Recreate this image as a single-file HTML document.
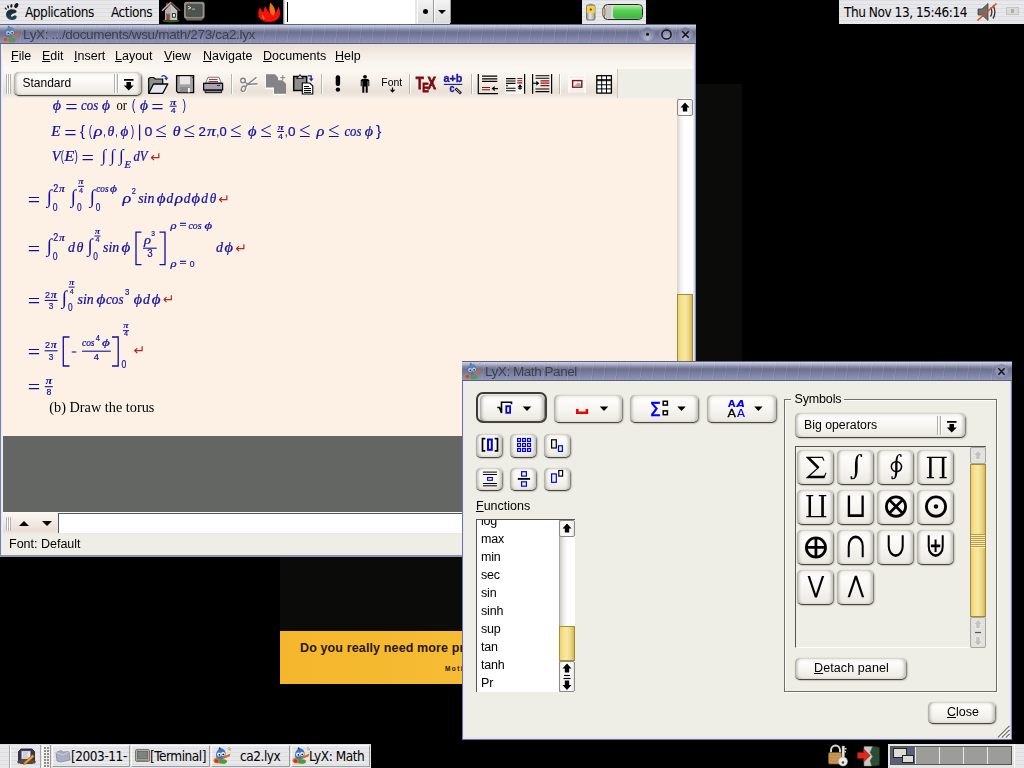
<!DOCTYPE html>
<html><head><meta charset="utf-8"><title>LyX desktop</title>
<style>
html,body{margin:0;padding:0;width:1024px;height:768px;overflow:hidden;background:#000;}
body{position:relative;font-family:"Liberation Sans",sans-serif;font-size:13px;color:#000;}
.abs{position:absolute;}
.t{position:absolute;white-space:pre;line-height:1;}
.panel{background:repeating-linear-gradient(#dcdce6 0 1px,#e8e8e8 1px 4px);}
.dv{font-family:"DejaVu Sans Condensed","DejaVu Sans",sans-serif;font-size:13.500px !important;letter-spacing:-.45px;}
.title{background:linear-gradient(#5e6280 0,#5e6280 1px,#c9cde0 1.5px,#b4b8d0 3px,#8a8ea9 5.500px,#6d718d 8px,#74789a 11px,#8488a8 15px,#8f94b5 18.500px,#5c6080 19px);}
.title:after{content:"";position:absolute;left:0;top:1px;right:0;bottom:1px;background:repeating-linear-gradient(98deg,rgba(255,255,255,0) 0 10px,rgba(255,255,255,.09) 10px 11px,rgba(40,40,80,.05) 11px 12px);}
.btn{position:absolute;border-radius:5px;background:linear-gradient(#f3f1ed 0%,#fdfcfa 22%,#f7f5f0 55%,#ebe8e2 100%);box-shadow:inset 3px 0 3px -1px #b6b4ae,inset -3px 0 3px -1px #c2c0ba,inset 0 1px 1px #e2e0da,0 1px 0 #47473f,1px 1px 2px #605e58,inset 1px 0 0 #a8a6a0;}
.tb{box-sizing:border-box;border:1px solid;border-color:#fafafa #9a9a9a #9a9a9a #fafafa;}
#lyx,#mp{will-change:transform;}
.m u{text-decoration:underline;}
.math{color:#1010a0;font-family:"Liberation Serif",serif;font-style:italic;}
</style></head>
<body>
<!-- wallpaper -->
<div class="abs" id="wall" style="left:280px;top:84px;width:462px;height:600px;background:#0b0b0a;"></div>
<div class="abs" style="left:280px;top:631px;width:182px;height:53px;background:linear-gradient(90deg,#f4b62c,#f6bc34);"></div>
<div class="t" style="left:300px;top:640.500px;font:bold 12.500px 'Liberation Sans',sans-serif;color:#2a1608;letter-spacing:.13px;">Do you really need more pr</div>
<div class="t" style="left:445px;top:665px;font:bold 6.500px 'Liberation Sans',sans-serif;color:#2a1608;letter-spacing:1.400px;">Moti</div>

<!-- top panel -->
<div class="abs panel" style="left:0;top:0;width:159px;height:24px;"></div>
<svg class="abs" style="left:0;top:0" width="24" height="24" viewBox="0 0 24 24">
 <defs><linearGradient id="ft" x1="0" x2="0" y1="0" y2="1"><stop offset="0" stop-color="#1c2226"/><stop offset="1" stop-color="#1d4a62"/></linearGradient></defs>
 <path d="M16.600 11.500C16.600 9.600 13.200 9 11 9.200C8 9.600 6 12 6 14.600C6 17.600 8.600 20 12 20C15 20 16.900 18.500 16.700 16.800C16.500 15.400 14.600 15.200 13.500 16C12.500 16.800 11.400 17 11 16.200C10.500 15.200 12 14.200 13.500 13.600C15 13 16.600 12.800 16.600 11.500Z" fill="url(#ft)"/>
 <ellipse cx="16.300" cy="5.500" rx="1.900" ry="2.700" transform="rotate(32 16.300 5.500)" fill="#15181a"/>
 <ellipse cx="11.400" cy="5.800" rx="1.100" ry="1.900" transform="rotate(5 11.400 5.800)" fill="#15181a"/>
 <ellipse cx="8.100" cy="6.900" rx=".85" ry="1.600" transform="rotate(-15 8.100 6.900)" fill="#15181a"/>
 <ellipse cx="5.800" cy="8.600" rx=".75" ry="1.350" transform="rotate(-38 5.800 8.600)" fill="#15181a"/>
</svg>
<div class="t dv" style="left:25px;top:5.500px;">Applications</div>
<div class="t dv" style="left:111px;top:5.500px;">Actions</div>
<!-- home icon -->
<svg class="abs" style="left:159px;top:0" width="24" height="24" viewBox="159 0 24 24">
 <ellipse cx="171" cy="20.800" rx="8.500" ry="1.700" fill="#2c5a22"/>
 <rect x="166" y="2.800" width="2.500" height="4" fill="#a82c28"/>
 <path d="M165 10.500L171 4l6.300 6.500V20H165z" fill="#c4c4c4"/>
 <path d="M165 10.500L171 4v16h-6z" fill="#b0b0b0"/>
 <path d="M162 10.800L171 2.300" stroke="#cdbfa8" stroke-width="1.500"/><path d="M171 2.300l9 8.500" stroke="#7c5c3c" stroke-width="1.500"/>
 <rect x="167" y="14.500" width="2.200" height="5.500" fill="#c83830"/><rect x="166.500" y="14" width="3.200" height="6" fill="none" stroke="#333" stroke-width=".5"/>
 <rect x="172.400" y="13.600" width="3" height="3.600" fill="#f4f4f4" stroke="#222" stroke-width=".9"/>
</svg>
<!-- terminal icon -->
<svg class="abs" style="left:183px;top:1px" width="23" height="21" viewBox="183 1 23 21">
 <rect x="184.500" y="2.300" width="19.600" height="16" rx="1.500" fill="#8e897e" stroke="#a8a298" stroke-width=".8"/>
 <rect x="186.400" y="4.400" width="15.700" height="12" rx="1" fill="#4e5450" stroke="#3a3c38" stroke-width=".6"/>
 <path d="M188 6.200l3 1.500-3 1.500" stroke="#e0e0e0" stroke-width="1" fill="none"/>
 <rect x="192" y="8.600" width="3" height="1" fill="#b8b8b8"/>
 <path d="M185.500 18.300h17.500l-1 2.200h-15.500z" fill="#6e6a60"/>
</svg>
<!-- flame -->
<svg class="abs" style="left:256px;top:0" width="26" height="24" viewBox="256 0 26 24">
 <path d="M258.300 13.500C258.500 11 259.300 9 260 7C260.800 9.500 262 11.500 263.500 12.300C263.500 10 264.300 7.800 265.500 5.900C266.300 9 268.300 11.500 270.500 13.300L275.500 12.500C276.800 10.800 278 9 278.600 6.800C279.600 9 280.200 11.500 280 14C279.700 19 275 22 269 22C263 22 258 19 258.300 13.500Z" fill="#f8100e"/>
 <path d="M270 2.500C272.500 4.500 274.800 7.500 275 10.500C275.100 12.500 274.300 14.500 273.600 15.700C272 14.800 270.300 13.300 269.700 11.500C269 9 269.800 5.500 270 2.500Z" fill="#f87212"/>
 <path d="M262 14.500C263.300 15.300 264.300 16.800 264.500 18.300C264.600 19.300 263.800 19.500 263.200 18.800C262.300 17.800 261.800 16 262 14.500Z" fill="#e88a20"/>
 <path d="M258 13l-1.300-.5 1.300 1.500zM280.200 13l1.300-.5-1.300 1.500zM258.600 16l-1.200.2 1.500.9zM279.700 16l1.200.2-1.500.9z" fill="#f8100e"/>
</svg>
<div class="abs" style="left:283px;top:0;width:1px;height:24px;background:#8e8e86;"></div><div class="abs" style="left:284px;top:0;width:1px;height:24px;background:#d8d8d4;"></div>

<div class="abs" style="left:285px;top:0;width:130px;height:24px;background:#fff;"></div>
<div class="abs" style="left:287px;top:2px;width:1px;height:20px;background:#000;"></div>
<div class="abs" style="left:415px;top:0;width:35px;height:24px;background:#e6e6e6;"></div>
<div class="abs" style="left:417px;top:0;width:15px;height:23px;background:linear-gradient(#f2f2f2,#dcdcdc);border-right:1px solid #999;border-left:1px solid #fff;"></div>
<div class="abs" style="left:434px;top:0;width:15px;height:23px;background:linear-gradient(#f2f2f2,#dcdcdc);border-right:1px solid #999;border-left:1px solid #fff;"></div>
<div class="abs" style="left:423px;top:9px;width:5px;height:5px;border-radius:50%;background:#000;"></div>
<div class="abs" style="left:438px;top:10px;width:0;height:0;border:4px solid transparent;border-top:4px solid #000;border-bottom:0;"></div>
<!-- battery applet -->
<div class="abs panel" style="left:582px;top:0;width:64px;height:24px;"></div>
<svg class="abs" style="left:584px;top:2px" width="62" height="20" viewBox="0 0 62 20">
 <defs><linearGradient id="bg1" x1="0" x2="0" y1="0" y2="1"><stop offset="0" stop-color="#a8f0a0"/><stop offset=".4" stop-color="#58d058"/><stop offset="1" stop-color="#3cb43c"/></linearGradient>
 <linearGradient id="bg2" x1="0" x2="1" y1="0" y2="0"><stop offset="0" stop-color="#888"/><stop offset=".4" stop-color="#e8e8e8"/><stop offset="1" stop-color="#999"/></linearGradient></defs>
 <rect x="2.500" y="3" width="8.500" height="15" rx="1.500" fill="url(#bg2)" stroke="#555" stroke-width=".7"/>
 <rect x="2.800" y="4" width="8" height="7" fill="#e8d840"/>
 <rect x="5" y="1.800" width="3.500" height="1.500" fill="#888"/>
 <path d="M6.800 6v3M5.500 7.500h2.600" stroke="#d02020" stroke-width=".9"/>
 <rect x="19.500" y="2.500" width="39" height="15" rx="4" fill="#d8d8d0" stroke="#222" stroke-width="1"/>
 <rect x="29" y="3.200" width="29" height="13.600" rx="3.500" fill="url(#bg1)"/>
 <rect x="18.500" y="6" width="2.500" height="8" rx="1" fill="#c8b898" stroke="#443" stroke-width=".6"/>
 <rect x="22" y="4" width="5" height="12" fill="#c0c0b8" opacity=".7"/>
</svg>
<!-- clock applet -->
<div class="abs panel" style="left:839px;top:0;width:185px;height:24px;"></div>
<div class="t dv" style="left:844px;top:5.500px;">Thu Nov 13, 15:46:14</div>
<svg class="abs" style="left:976px;top:1px" width="24" height="22" viewBox="0 0 24 22">
 <path d="M2 8h4l6-5.500v17L6 14H2z" fill="#6e6e6e" stroke="#333" stroke-width=".7"/>
 <path d="M14.500 6.500c1.500 2.500 1.500 6.500 0 9M17 4.500c2.500 3.500 2.500 9.500 0 13" fill="none" stroke="#333" stroke-width="1.300"/>
 <path d="M1.500 19.500L20.500 2.500" stroke="#e04828" stroke-width="1.600"/>
</svg>
<div class="abs" style="left:1006px;top:7px;width:13px;height:8px;background:#dadada;border:1px solid #c4c4c4;box-sizing:border-box;"></div>
<div class="abs" style="left:1011px;top:9px;width:3px;height:4px;background:#b0b0a0;"></div>

<!-- LyX main window -->
<div class="abs" id="lyx" style="left:0;top:24px;width:696px;height:533px;background:#eeeee6;">
  <div class="abs title" style="left:0;top:0;width:696px;height:20px;"></div>
  <svg class="abs" style="left:2px;top:1px;opacity:.62" width="19" height="18" viewBox="0 0 19 17">
 <ellipse cx="5" cy="13.500" rx="4.500" ry="3" fill="#e07820"/><ellipse cx="10" cy="14.500" rx="4" ry="2.300" fill="#4a9a3a"/><circle cx="3.500" cy="14" r="1.800" fill="#d03020"/>
 <path d="M3 9c0-4 2-7.500 5-7.500S13 4 12.500 8c-.3 2.500-2 4.500-4.500 4.500S3 11 3 9z" fill="#3a78c8"/>
 <path d="M5.500 1.500l1.500-1.500 1 2.500z" fill="#222"/>
 <circle cx="6" cy="7.500" r="1.900" fill="#fff"/><circle cx="10" cy="7" r="1.900" fill="#fff"/><circle cx="6.300" cy="7.800" r=".9" fill="#111"/><circle cx="10.200" cy="7.300" r=".9" fill="#111"/>
 <path d="M9 10l8.500-3.500-1 3L10 12z" fill="#e06a20"/><path d="M14.500 3l3-2 .5 2.500z" fill="#d8a040"/><path d="M15 1.500l1.500-1.500" stroke="#6aa0e0" stroke-width="1"/>
</svg>
      <div class="t" style="left:23px;top:3.500px;font-size:13.500px;letter-spacing:-.33px;color:#3e4052;">LyX: .../documents/wsu/math/273/ca2.lyx</div>
  <!-- title buttons -->
  <svg class="abs" style="left:636px;top:1px" width="60" height="19" viewBox="0 0 60 19">
   <defs><radialGradient id="tb" cx=".5" cy=".8" r=".7"><stop offset="0" stop-color="#b4b8d2"/><stop offset="1" stop-color="#767a98"/></radialGradient></defs>
   <circle cx="11.500" cy="9.500" r="6.800" fill="url(#tb)" stroke="#8a8eac" stroke-width=".8"/>
   <circle cx="30.500" cy="9.500" r="6.800" fill="url(#tb)" stroke="#8a8eac" stroke-width=".8"/>
   <circle cx="49.500" cy="9.500" r="6.800" fill="url(#tb)" stroke="#8a8eac" stroke-width=".8"/>
   <circle cx="11.500" cy="9.200" r="1.500" fill="#111"/>
   <circle cx="30.500" cy="9.500" r="4.600" fill="none" stroke="#15151a" stroke-width="1.500"/>
   <path d="M46.300 6.200l6.400 6.600M52.700 6.200l-6.400 6.600" stroke="#15151a" stroke-width="1.600"/>
  </svg>
  <!-- menubar -->
  <div class="abs" style="left:2px;top:20px;width:692px;height:25px;background:linear-gradient(#e8dfd5 0%,#f4ede5 40%,#fcf8f3 100%);"></div>
  <div class="t m" style="left:11px;top:26px;font-size:12.500px;"><u>F</u>ile</div>
  <div class="t m" style="left:42px;top:26px;font-size:12.500px;"><u>E</u>dit</div>
  <div class="t m" style="left:74px;top:26px;font-size:12.500px;"><u>I</u>nsert</div>
  <div class="t m" style="left:115px;top:26px;font-size:12.500px;"><u>L</u>ayout</div>
  <div class="t m" style="left:164px;top:26px;font-size:12.500px;"><u>V</u>iew</div>
  <div class="t m" style="left:203px;top:26px;font-size:12.500px;"><u>N</u>avigate</div>
  <div class="t m" style="left:263px;top:26px;font-size:12.500px;"><u>D</u>ocuments</div>
  <div class="t m" style="left:335px;top:26px;font-size:12.500px;"><u>H</u>elp</div>
  <!-- toolbar -->
  <div class="abs" id="tbar" style="left:2px;top:45px;width:616px;height:29px;background:linear-gradient(#fcf8f3 0%,#f6efe8 40%,#e9e0d7 78%,#f3ece5 100%);"></div>
  <div class="abs" style="left:617px;top:45px;width:1px;height:29px;background:#c8c6c0;"></div>
  <div class="abs" style="left:6px;top:50px;width:5px;height:20px;background:repeating-linear-gradient(90deg,#b8b6b0 0 1px,#fff 1px 2px);"></div>
  <div class="btn" style="left:14px;top:47.500px;width:127px;height:23.500px;"></div>
  <div class="t" style="left:22.500px;top:53px;font-size:12px;">Standard</div>
  <div class="abs" style="left:114px;top:50px;width:5px;height:19px;background:repeating-linear-gradient(90deg,#b0aea8 0 1px,#fff 1px 2px,#e8e6e0 2px 3px);"></div>
  <svg class="abs" style="left:123px;top:54px" width="12" height="13" viewBox="0 0 12 13"><path d="M1 1h9.500v1.700H1zM3.500 4h4.500v3.500h2.700L5.750 12.500 .8 7.500h2.700z" fill="#000"/></svg>
  <svg class="abs" style="left:144px;top:46px" width="474" height="28" viewBox="144 70 474 28" font-family="'Liberation Sans',sans-serif">
   <!-- open -->
   <path d="M148.700 93.200V78.500l1.500-1h3.500l1.500 1.500h7.500v5" fill="#8e8c8c" stroke="#000" stroke-width="1.200"/>
   <path d="M153.500 84h14.300l-5 9.300h-14.100z" fill="#e6e4ec" stroke="#000" stroke-width="1.300" stroke-linejoin="round"/>
   <path d="M161.500 76.500c2-1.500 4.500-1 5 1.800" fill="none" stroke="#2030b0" stroke-width="1.300"/><path d="M164.300 78l2.200 2.600 1.800-3z" fill="#2030b0"/>
   <!-- save -->
   <path d="M176.600 75.600h17v17h-15.500l-1.500-1.500z" fill="#a4a2a2" stroke="#000" stroke-width="1.300"/>
   <rect x="180" y="76.300" width="10" height="8" fill="#e6e6e6"/>
   <rect x="180" y="87" width="10" height="5.300" fill="#8c8a8a"/><rect x="188" y="88" width="1.800" height="4.300" fill="#fff"/>
   <rect x="192" y="77" width="1" height="1.200" fill="#444"/>
   <!-- print -->
   <path d="M208 77.300h11l2.300 5.700h-15.600z" fill="#fbf9f9" stroke="#444" stroke-width=".7"/>
   <path d="M209 79.500h8.500M208.500 81.500h9.500" stroke="#b01818" stroke-width=".9"/>
   <rect x="203.600" y="83.300" width="19" height="6.700" fill="#aca4ac" stroke="#000" stroke-width="1.200"/>
   <rect x="217" y="85" width="3" height="1" fill="#2020c0"/>
   <path d="M205 90.300h16.500v2.400h-16.500z" fill="#8a828a" stroke="#000" stroke-width=".9"/>
   <!-- sep -->
   <path d="M231.500 74v20" stroke="#b8b6ae" stroke-width="1"/><path d="M232.500 74v20" stroke="#fff" stroke-width="1"/>
   <!-- cut -->
   <g transform="translate(.8 .8)" stroke="#fff" fill="none" stroke-width="1.400"><circle cx="243" cy="80.500" r="2.300"/><ellipse cx="243.500" cy="88.800" rx="2" ry="2.700" transform="rotate(20 243.500 88.800)"/><path d="M245 82l3 2.500 9.500-.800M245.500 87l2-2.500 9-7.300"/></g>
   <g stroke="#858385" fill="none" stroke-width="1.400"><circle cx="243" cy="80.500" r="2.300"/><ellipse cx="243.500" cy="88.800" rx="2" ry="2.700" transform="rotate(20 243.500 88.800)"/><path d="M245 82l3 2.500 9.500-.800M245.500 87l2-2.500 9-7.300"/></g>
   <!-- copy -->
   <path d="M266 75h9l3 3v10.500h-12z M274 81h9l3 3v10.500h-12z" fill="#fff" transform="translate(-.8 .8)"/>
   <path d="M266 74.300h9l3 3.200v10h-12z" fill="#858385"/><path d="M274 80.300h8.500l3.500 3.500v10h-12z" fill="#858385"/>
   <path d="M280.300 77.600h5M282.800 75.100v5" stroke="#858385" stroke-width="1"/>
   <!-- paste -->
   <rect x="293.700" y="76.500" width="13" height="14" fill="#908c8c" stroke="#000" stroke-width="1.500"/>
   <path d="M296.500 78.300l2-1.300 1.500-2.500 1.500 2.500 2 1.300z" fill="#fff" stroke="#000" stroke-width=".9"/>
   <path d="M302.300 83h7.500l3 3v8h-10.500z" fill="#fff" stroke="#000" stroke-width="1.100"/>
   <path d="M304 86.500h5M304 88.500h7M304 90.500h7M304 92.400h7" stroke="#000" stroke-width="1"/>
   <path d="M308 75.800h3.200v3.500" fill="none" stroke="#1828b0" stroke-width="1.300"/><path d="M308.800 78.600h4.800l-2.400 2.800z" fill="#1828b0"/>
   <!-- sep -->
   <path d="M321.500 74v20" stroke="#b8b6ae"/><path d="M322.500 74v20" stroke="#fff"/>
   <!-- exclaim -->
   <rect x="335.700" y="75.300" width="4.400" height="10.700" rx="2" fill="#000"/><circle cx="337.900" cy="89.600" r="2.200" fill="#000"/>
   <!-- person -->
   <circle cx="365" cy="76.800" r="1.900" fill="#000"/>
   <path d="M362 79h6l1.300 1.300v6h-1v-5h-.6v11.500h-2V86.500h-1.400v6.300h-2V81.300h-.6v5h-1v-6z" fill="#000"/>
   <!-- Font -->
   <text x="381.300" y="85.800" font-size="11.500" textLength="20.800" lengthAdjust="spacingAndGlyphs" fill="#000">Font</text>
   <path d="M392.500 87.500v3.500" stroke="#000" stroke-width="1.200"/><path d="M389.800 89.800h5.400l-2.700 3z" fill="#000"/>
   <!-- sep -->
   <path d="M409.500 74v20" stroke="#b8b6ae"/><path d="M410.500 74v20" stroke="#fff"/>
   <!-- TeX -->
   <g font-weight="bold" fill="#7c0a12" stroke="#7c0a12" stroke-width=".8"><text x="415.800" y="89" font-size="16.500" textLength="8" lengthAdjust="spacingAndGlyphs">T</text><text x="422.300" y="92" font-size="13.500" textLength="6.500" lengthAdjust="spacingAndGlyphs">E</text><text x="427.500" y="89" font-size="16.500" textLength="8.500" lengthAdjust="spacingAndGlyphs">X</text></g>
   <!-- a+b/c -->
   <g font-weight="bold" fill="#1818a0" stroke="#1818a0" stroke-width=".35"><text x="443.600" y="82.300" font-size="11" textLength="18.800" lengthAdjust="spacingAndGlyphs">a+b</text><text x="449.500" y="92" font-size="11" textLength="5" lengthAdjust="spacingAndGlyphs">c</text></g>
   <path d="M443.800 84.400h18.500" stroke="#1818a0" stroke-width="1.100"/>
   <path d="M455.500 88.500l5.500 5" stroke="#000" stroke-width="2.600"/><path d="M456 89l4.500 4" stroke="#fff" stroke-width=".9"/>
   <!-- sep -->
   <path d="M471.500 74v20" stroke="#b8b6ae"/><path d="M472.500 74v20" stroke="#fff"/>
   <!-- footnote -->
   <path d="M478.300 74v19.600h19.700" fill="none" stroke="#000" stroke-width="1.200"/>
   <path d="M482 76.200h15.300M482 78.800h15.300M482 81.400h15.300" stroke="#000" stroke-width="1.200"/>
   <path d="M482 87.500h8M482 89.700h8" stroke="#8a1010" stroke-width="1.100"/>
   <path d="M493 88.600h5" stroke="#000" stroke-width="1.200"/><path d="M491.500 88.600l3.200-2.700v5.400z" fill="#000"/>
   <!-- margin -->
   <rect x="505" y="74.500" width="19" height="19.500" fill="#f6f4f0"/>
   <path d="M506 78.600h9.500M506 81h9.500M506 83.400h9.500M506 85.800h2M506 88.300h9.500M506 90.700h9.500" stroke="#000" stroke-width="1.100"/>
   <path d="M517.300 78.500h5M517.300 80.700h5M517.300 82.900h5" stroke="#8a1010" stroke-width="1.100"/>
   <path d="M520 86v3.800" stroke="#000" stroke-width="1.200"/><path d="M517.500 87.300l2.500-3 2.500 3z" fill="#000"/><path d="M518 88.300h4" stroke="#000" stroke-width=".9"/>
   <path d="M524.600 74v19.800" stroke="#000" stroke-width="1.200"/>
   <!-- depth -->
   <path d="M532.600 74v19.800M551.600 74v19.800" stroke="#000" stroke-width="1.200"/>
   <path d="M535.500 75.800h13.800M535.500 78.200h13.800M535.500 89h13.800M535.500 91.600h13.800" stroke="#000" stroke-width="1.100"/>
   <path d="M540.500 80.800h8.800M540.500 83.200h8.800M540.500 85.600h8.800" stroke="#8a1010" stroke-width="1.200"/>
   <path d="M533 83.200h4" stroke="#000" stroke-width="1.100"/><path d="M539.300 83.200l-3-2.500v5z" fill="#000"/>
   <!-- sep -->
   <path d="M559.500 74v20" stroke="#b8b6ae"/><path d="M560.500 74v20" stroke="#fff"/>
   <!-- figure -->
   <rect x="568" y="74.800" width="18" height="18" fill="#fbf9f7"/>
   <path d="M570 77.200h14M570 90h14M570 92h14" stroke="#e6e0dc" stroke-width=".8"/>
   <rect x="572.600" y="80.600" width="9.200" height="6.600" fill="#f4f2f2" stroke="#8a1010" stroke-width="1.400"/>
   <path d="M573.500 86.500l2.500-2 1.500-1.500h2l1.500 2v1.500z" fill="#a8a4a4"/>
   <!-- table -->
   <rect x="596.800" y="75.700" width="14.600" height="17.400" fill="#fff" stroke="#000" stroke-width="1.300"/>
   <path d="M596.800 79.700h14.600M596.800 80.700h14.600M596.800 84.800h14.600M596.800 88.900h14.600M601.700 75.700v17.400M606.500 75.700v17.400" stroke="#000" stroke-width="1"/>
  </svg>
  <!-- content -->
  <div class="abs" id="doc" style="left:2px;top:74px;width:676px;height:338px;background:#fdf1e6;"></div>
  <!--MATH--><svg class="abs" style="left:2px;top:74px" width="676" height="338" viewBox="2 98 676 338">
<style>
.mi{font:italic 14px "Liberation Serif",serif;fill:#1010a0;stroke:#1010a0;stroke-width:.22px}
.mib{font:italic bold 10px "Liberation Serif",serif;fill:#1010a0}
.mr{font:14px "Liberation Serif",serif;fill:#1010a0;stroke:#1010a0;stroke-width:.3px}
.mo{font:14px "Liberation Serif",serif;fill:#1010a0}
.mn{font:12.300px "Liberation Sans",sans-serif;fill:#1010a0;stroke:#1010a0;stroke-width:.2px}
.mp{font:14px "Liberation Sans",sans-serif;fill:#1010a0}
.tr{font:14px "Liberation Serif",serif;fill:#000}
.ret{font:14px "DejaVu Sans",sans-serif;fill:#b02828}
</style>
<text class="mi" x="52.7" y="110" textLength="8.3" lengthAdjust="spacingAndGlyphs">ϕ</text>
<text class="mo" x="65.3" y="113.9" style="font-size:22px">=</text>
<text class="mi" x="81" y="110" textLength="17.2" lengthAdjust="spacingAndGlyphs">cos</text>
<text class="mi" x="102" y="110" textLength="8" lengthAdjust="spacingAndGlyphs">ϕ</text>
<text class="tr" x="116.5" y="110" textLength="10.5" lengthAdjust="spacingAndGlyphs">or</text>
<text class="mp" x="131.8" y="110" textLength="3.7" lengthAdjust="spacingAndGlyphs">(</text>
<text class="mi" x="140" y="110" textLength="8" lengthAdjust="spacingAndGlyphs">ϕ</text>
<text class="mo" x="151.2" y="113.9" style="font-size:22px">=</text>
<text class="mib" x="170" y="104.6" textLength="6.4" lengthAdjust="spacingAndGlyphs" style="font-size:8px">π</text>
<path d="M169.7 106.2L176.7 106.2" stroke="#1010a0" stroke-width="1"/>
<text class="mn" x="170.7" y="113.2" textLength="5" lengthAdjust="spacingAndGlyphs" style="font-size:8px">4</text>
<text class="mp" x="182.5" y="110" textLength="3.5" lengthAdjust="spacingAndGlyphs">)</text>
<text class="mi" x="51.3" y="136" textLength="9.2" lengthAdjust="spacingAndGlyphs">E</text>
<text class="mo" x="64.3" y="139.9" style="font-size:22px">=</text>
<text class="mp" x="80" y="136" textLength="5" lengthAdjust="spacingAndGlyphs">{</text>
<text class="mp" x="88.8" y="136" textLength="3.5" lengthAdjust="spacingAndGlyphs">(</text>
<text class="mi" x="93.7" y="136" textLength="8.8" lengthAdjust="spacingAndGlyphs">ρ</text>
<text class="mn" x="103.3" y="136" textLength="2.5" lengthAdjust="spacingAndGlyphs">,</text>
<text class="mi" x="107.4" y="136" textLength="6.8" lengthAdjust="spacingAndGlyphs">θ</text>
<text class="mn" x="115.3" y="136" textLength="2.5" lengthAdjust="spacingAndGlyphs">,</text>
<text class="mi" x="120.5" y="136" textLength="7.8" lengthAdjust="spacingAndGlyphs">ϕ</text>
<text class="mp" x="130.8" y="136" textLength="3.5" lengthAdjust="spacingAndGlyphs">)</text>
<path d="M139.6 124.5L139.6 140.5" stroke="#1010a0" stroke-width="1.2"/>
<text class="mn" x="144.5" y="136" textLength="7.8" lengthAdjust="spacingAndGlyphs">0</text>
<text class="mo" x="155.3" y="137.4" style="font-size:21px">≤</text>
<text class="mi" x="172.8" y="136" textLength="7.8" lengthAdjust="spacingAndGlyphs">θ</text>
<text class="mo" x="183.6" y="137.4" style="font-size:21px">≤</text>
<text class="mn" x="198.6" y="136" textLength="7.4" lengthAdjust="spacingAndGlyphs">2</text>
<text class="mi" x="207" y="136" textLength="8.8" lengthAdjust="spacingAndGlyphs">π</text>
<text class="mn" x="216.5" y="136" textLength="2.5" lengthAdjust="spacingAndGlyphs">,</text>
<text class="mn" x="219.4" y="136" textLength="7.2" lengthAdjust="spacingAndGlyphs">0</text>
<text class="mo" x="230.1" y="137.4" style="font-size:21px">≤</text>
<text class="mi" x="248" y="136" textLength="8.5" lengthAdjust="spacingAndGlyphs">ϕ</text>
<text class="mo" x="260.3" y="137.4" style="font-size:21px">≤</text>
<text class="mib" x="277.4" y="129.6" textLength="6.4" lengthAdjust="spacingAndGlyphs" style="font-size:8px">π</text>
<path d="M277.1 131.5L284.1 131.5" stroke="#1010a0" stroke-width="1"/>
<text class="mn" x="278.1" y="138.5" textLength="5" lengthAdjust="spacingAndGlyphs" style="font-size:8px">4</text>
<text class="mn" x="285" y="136" textLength="2.5" lengthAdjust="spacingAndGlyphs">,</text>
<text class="mn" x="288" y="136" textLength="7.5" lengthAdjust="spacingAndGlyphs">0</text>
<text class="mo" x="298.9" y="137.4" style="font-size:21px">≤</text>
<text class="mi" x="316.4" y="136" textLength="7.9" lengthAdjust="spacingAndGlyphs">ρ</text>
<text class="mo" x="327.9" y="137.4" style="font-size:21px">≤</text>
<text class="mi" x="344.4" y="136" textLength="17" lengthAdjust="spacingAndGlyphs">cos</text>
<text class="mi" x="364.7" y="136" textLength="8.3" lengthAdjust="spacingAndGlyphs">ϕ</text>
<text class="mp" x="376" y="136" textLength="5.5" lengthAdjust="spacingAndGlyphs">}</text>
<text class="mi" x="51.7" y="161.4" textLength="8.8" lengthAdjust="spacingAndGlyphs">V</text>
<text class="mp" x="60.8" y="161.4" textLength="3.2" lengthAdjust="spacingAndGlyphs">(</text>
<text class="mi" x="64.4" y="161.4" textLength="9.8" lengthAdjust="spacingAndGlyphs">E</text>
<text class="mp" x="74.6" y="161.4" textLength="3.4" lengthAdjust="spacingAndGlyphs">)</text>
<text class="mo" x="81.5" y="165.3" style="font-size:22px">=</text>
<text class="mo" x="101.5" y="160.8" style="font-size:17px">∫</text>
<text class="mo" x="110.3" y="160.8" style="font-size:17px">∫</text>
<text class="mo" x="119" y="160.8" style="font-size:17px">∫</text>
<text class="mi" x="124.4" y="167.9" textLength="6.4" lengthAdjust="spacingAndGlyphs" style="font-size:10px">E</text>
<text class="mi" x="133.4" y="161.4" textLength="14" lengthAdjust="spacingAndGlyphs">dV</text>
<text class="ret" x="150.3" y="161.9">↵</text>
<text class="mo" x="27.7" y="207.3" style="font-size:22px">=</text>
<text class="mo" x="46.8" y="203.3" style="font-size:19px">∫</text>
<text class="mn" x="53.2" y="192.2" textLength="5" lengthAdjust="spacingAndGlyphs" style="font-size:10px">2</text>
<text class="mib" x="59" y="192.2" textLength="6" lengthAdjust="spacingAndGlyphs" style="font-size:10px">π</text>
<text class="mn" x="52.8" y="210.5" textLength="4.8" lengthAdjust="spacingAndGlyphs" style="font-size:10px">0</text>
<text class="mo" x="70.8" y="203.3" style="font-size:19px">∫</text>
<text class="mib" x="78.3" y="184.2" textLength="5.4" lengthAdjust="spacingAndGlyphs" style="font-size:8px">π</text>
<path d="M78 186.3L84 186.3" stroke="#1010a0" stroke-width="1"/>
<text class="mn" x="79" y="192.6" textLength="4" lengthAdjust="spacingAndGlyphs" style="font-size:8px">4</text>
<text class="mn" x="77" y="210.5" textLength="4.6" lengthAdjust="spacingAndGlyphs" style="font-size:10px">0</text>
<text class="mo" x="89.8" y="203.3" style="font-size:19px">∫</text>
<text class="mi" x="96.2" y="191.6" textLength="12.3" lengthAdjust="spacingAndGlyphs" style="font-size:10.5px">cos</text>
<text class="mi" x="110" y="191.6" textLength="7" lengthAdjust="spacingAndGlyphs" style="font-size:10.5px">ϕ</text>
<text class="mn" x="95.8" y="210.5" textLength="4.6" lengthAdjust="spacingAndGlyphs" style="font-size:10px">0</text>
<text class="mi" x="122.5" y="203.3" textLength="8.8" lengthAdjust="spacingAndGlyphs">ρ</text>
<text class="mn" x="131.7" y="193.5" textLength="4.1" lengthAdjust="spacingAndGlyphs" style="font-size:9.5px">2</text>
<text class="mi" x="138.2" y="203.3" textLength="16.2" lengthAdjust="spacingAndGlyphs">sin</text>
<text class="mi" x="156.7" y="203.3" textLength="8.8" lengthAdjust="spacingAndGlyphs">ϕ</text>
<text class="mi" x="166.5" y="203.3" textLength="6.7" lengthAdjust="spacingAndGlyphs">d</text>
<text class="mi" x="174.7" y="203.3" textLength="8.3" lengthAdjust="spacingAndGlyphs">ρ</text>
<text class="mi" x="183.7" y="203.3" textLength="6.7" lengthAdjust="spacingAndGlyphs">d</text>
<text class="mi" x="191.5" y="203.3" textLength="8.5" lengthAdjust="spacingAndGlyphs">ϕ</text>
<text class="mi" x="201.2" y="203.3" textLength="6.7" lengthAdjust="spacingAndGlyphs">d</text>
<text class="mi" x="209.8" y="203.3" textLength="6.5" lengthAdjust="spacingAndGlyphs">θ</text>
<text class="ret" x="218.3" y="203.8">↵</text>
<text class="mo" x="27.7" y="256.1" style="font-size:22px">=</text>
<text class="mo" x="46.8" y="252.1" style="font-size:19px">∫</text>
<text class="mn" x="53.2" y="240.6" textLength="5" lengthAdjust="spacingAndGlyphs" style="font-size:10px">2</text>
<text class="mib" x="59" y="240.6" textLength="6" lengthAdjust="spacingAndGlyphs" style="font-size:10px">π</text>
<text class="mn" x="52.8" y="259.6" textLength="4.8" lengthAdjust="spacingAndGlyphs" style="font-size:10px">0</text>
<text class="mi" x="67.9" y="252.1" textLength="7" lengthAdjust="spacingAndGlyphs">d</text>
<text class="mi" x="76.6" y="252.1" textLength="6.9" lengthAdjust="spacingAndGlyphs">θ</text>
<text class="mo" x="87.4" y="252.1" style="font-size:19px">∫</text>
<text class="mib" x="94.8" y="233.8" textLength="5.4" lengthAdjust="spacingAndGlyphs" style="font-size:8px">π</text>
<path d="M94.5 236L100.5 236" stroke="#1010a0" stroke-width="1"/>
<text class="mn" x="95.5" y="242.3" textLength="4" lengthAdjust="spacingAndGlyphs" style="font-size:8px">4</text>
<text class="mn" x="93.2" y="259.6" textLength="4.6" lengthAdjust="spacingAndGlyphs" style="font-size:10px">0</text>
<text class="mi" x="103" y="252.1" textLength="16.2" lengthAdjust="spacingAndGlyphs">sin</text>
<text class="mi" x="121.6" y="252.1" textLength="8.8" lengthAdjust="spacingAndGlyphs">ϕ</text>
<path d="M141.5 232.2H136v32.500h5.500M159.500 232.200H165v32.500h-5.500" fill="none" stroke="#1010a0" stroke-width="1.300"/>
<text class="mi" x="144" y="244.3" textLength="7" lengthAdjust="spacingAndGlyphs" style="font-size:12px">ρ</text>
<text class="mn" x="151.3" y="236.2" textLength="3.7" lengthAdjust="spacingAndGlyphs" style="font-size:8px">3</text>
<path d="M143 248.2L156.7 248.2" stroke="#1010a0" stroke-width="1.1"/>
<text class="mn" x="147.2" y="257.2" textLength="5.4" lengthAdjust="spacingAndGlyphs" style="font-size:10px">3</text>
<text class="mi" x="170.4" y="228.7" textLength="6.1" lengthAdjust="spacingAndGlyphs" style="font-size:10.5px">ρ</text>
<text class="mr" x="179.5" y="228.7" textLength="7" lengthAdjust="spacingAndGlyphs" style="font-size:12px">=</text>
<text class="mi" x="188.5" y="228.7" textLength="13" lengthAdjust="spacingAndGlyphs" style="font-size:10.5px">cos</text>
<text class="mi" x="204.5" y="228.7" textLength="7.7" lengthAdjust="spacingAndGlyphs" style="font-size:10.5px">ϕ</text>
<text class="mi" x="170.4" y="266.8" textLength="6.1" lengthAdjust="spacingAndGlyphs" style="font-size:10.5px">ρ</text>
<text class="mr" x="179.5" y="266.8" textLength="7" lengthAdjust="spacingAndGlyphs" style="font-size:12px">=</text>
<text class="mn" x="189.8" y="266.8" textLength="4.8" lengthAdjust="spacingAndGlyphs" style="font-size:9.5px">0</text>
<text class="mi" x="216" y="252.1" textLength="7" lengthAdjust="spacingAndGlyphs">d</text>
<text class="mi" x="224.5" y="252.1" textLength="8.5" lengthAdjust="spacingAndGlyphs">ϕ</text>
<text class="ret" x="235.3" y="252.6">↵</text>
<text class="mo" x="27.7" y="307.7" style="font-size:22px">=</text>
<text class="mn" x="45" y="298.2" textLength="5" lengthAdjust="spacingAndGlyphs" style="font-size:9.5px">2</text>
<text class="mib" x="50.8" y="298.2" textLength="6.2" lengthAdjust="spacingAndGlyphs" style="font-size:9.5px">π</text>
<path d="M44.6 300.4L57.6 300.4" stroke="#1010a0" stroke-width="1.1"/>
<text class="mn" x="48.8" y="308.8" textLength="4.6" lengthAdjust="spacingAndGlyphs" style="font-size:9.5px">3</text>
<text class="mo" x="61.8" y="304.3" style="font-size:19px">∫</text>
<text class="mib" x="69" y="285.4" textLength="5.4" lengthAdjust="spacingAndGlyphs" style="font-size:8px">π</text>
<path d="M68.7 287.1L74.7 287.1" stroke="#1010a0" stroke-width="1"/>
<text class="mn" x="69.7" y="293.7" textLength="4" lengthAdjust="spacingAndGlyphs" style="font-size:8px">4</text>
<text class="mn" x="67.9" y="311.2" textLength="4.6" lengthAdjust="spacingAndGlyphs" style="font-size:10px">0</text>
<text class="mi" x="77.6" y="304.3" textLength="16.2" lengthAdjust="spacingAndGlyphs">sin</text>
<text class="mi" x="96.6" y="304.3" textLength="8.9" lengthAdjust="spacingAndGlyphs">ϕ</text>
<text class="mi" x="106" y="304.3" textLength="17.5" lengthAdjust="spacingAndGlyphs">cos</text>
<text class="mn" x="125" y="294.7" textLength="4.4" lengthAdjust="spacingAndGlyphs" style="font-size:9.5px">3</text>
<text class="mi" x="133.7" y="304.3" textLength="8.3" lengthAdjust="spacingAndGlyphs">ϕ</text>
<text class="mi" x="143" y="304.3" textLength="7" lengthAdjust="spacingAndGlyphs">d</text>
<text class="mi" x="151.8" y="304.3" textLength="8.8" lengthAdjust="spacingAndGlyphs">ϕ</text>
<text class="ret" x="162.8" y="304.3">↵</text>
<text class="mo" x="27.7" y="358.9" style="font-size:22px">=</text>
<text class="mn" x="45" y="348.4" textLength="5" lengthAdjust="spacingAndGlyphs" style="font-size:9.5px">2</text>
<text class="mib" x="50.8" y="348.4" textLength="6.2" lengthAdjust="spacingAndGlyphs" style="font-size:9.5px">π</text>
<path d="M44.6 350.8L57.6 350.8" stroke="#1010a0" stroke-width="1.1"/>
<text class="mn" x="48.8" y="359.6" textLength="4.6" lengthAdjust="spacingAndGlyphs" style="font-size:9.5px">3</text>
<path d="M69.500 337H63.300v29h6.200M112 337h6.200v29H112" fill="none" stroke="#1010a0" stroke-width="1.300"/>
<path d="M71.8 352L76.3 352" stroke="#1010a0" stroke-width="1.1"/>
<text class="mi" x="82" y="346.3" textLength="12.5" lengthAdjust="spacingAndGlyphs" style="font-size:10.5px">cos</text>
<text class="mn" x="95.8" y="341.2" textLength="4.2" lengthAdjust="spacingAndGlyphs" style="font-size:8.5px">4</text>
<text class="mi" x="102" y="346.3" textLength="7.8" lengthAdjust="spacingAndGlyphs" style="font-size:10.5px">ϕ</text>
<path d="M82 351.2L110.8 351.2" stroke="#1010a0" stroke-width="1.1"/>
<text class="mn" x="93.8" y="360" textLength="5.2" lengthAdjust="spacingAndGlyphs" style="font-size:9.5px">4</text>
<text class="mib" x="123.3" y="328.2" textLength="5.4" lengthAdjust="spacingAndGlyphs" style="font-size:8px">π</text>
<path d="M123 330.7L129 330.7" stroke="#1010a0" stroke-width="1"/>
<text class="mn" x="124" y="336.3" textLength="4" lengthAdjust="spacingAndGlyphs" style="font-size:8px">4</text>
<text class="mn" x="121.6" y="367.9" textLength="4.8" lengthAdjust="spacingAndGlyphs" style="font-size:10px">0</text>
<text class="ret" x="133.5" y="354.5">↵</text>
<text class="mo" x="27.7" y="394" style="font-size:22px">=</text>
<text class="mib" x="45.4" y="384.2" textLength="6.8" lengthAdjust="spacingAndGlyphs" style="font-size:9.5px">π</text>
<path d="M44.8 386.7L52.8 386.7" stroke="#1010a0" stroke-width="1.1"/>
<text class="mn" x="46.4" y="394.7" textLength="4.9" lengthAdjust="spacingAndGlyphs" style="font-size:9.5px">8</text>
<text class="tr" x="49.3" y="411.7" textLength="105.1" lengthAdjust="spacingAndGlyphs">(b) Draw the torus</text>
</svg><!--/MATH-->
  <div class="abs" id="sb" style="left:677px;top:74px;width:16px;height:338px;background:linear-gradient(90deg,#d4d2cc 0,#f4f3f0 4px,#fff 8px,#fff 100%);"></div>
  <div class="abs" style="left:677px;top:75px;width:16px;height:17px;box-sizing:border-box;border:1px solid #8a8884;border-radius:2px;background:linear-gradient(90deg,#f0eeea,#fff 40%,#fff 70%,#e8e6e2);"></div>
  <svg class="abs" style="left:680px;top:78px" width="10" height="10" viewBox="0 0 10 10"><path d="M5 .5L9.500 5.500H7.200V9.500H2.800V5.500H.5z" fill="#000"/></svg>
  <div class="abs" style="left:677px;top:270px;width:16px;height:142px;box-sizing:border-box;border:1px solid #a08c3c;background:linear-gradient(90deg,#ecd070 0,#f6e290 25%,#f8e8a4 50%,#ecd47c 80%,#d4b450 100%);"></div>
  <div class="abs" style="left:3px;top:412px;width:690px;height:76px;background:#646663;"></div>
  <!-- minibuffer -->
  <div class="abs" style="left:2px;top:488px;width:692px;height:23px;background:linear-gradient(#fbf7f3 0,#f4ece6 40%,#e9ded6 80%,#f2ece6 100%);"></div>
  <div class="abs" style="left:58px;top:489px;width:636px;height:20px;background:#fff;border-left:1px solid #555;border-top:1px solid #555;box-sizing:border-box;"></div>
  <div class="abs" style="left:6px;top:493px;width:5px;height:14px;background:repeating-linear-gradient(90deg,#b8b6b0 0 1px,#fff 1px 2px);"></div>
  <div class="abs" style="left:19px;top:497px;width:0;height:0;border:5px solid transparent;border-bottom:5px solid #000;border-top:0;"></div>
  <div class="abs" style="left:42px;top:497px;width:0;height:0;border:5px solid transparent;border-top:5px solid #000;border-bottom:0;"></div>
  <!-- status -->
  <div class="t" style="left:9px;top:513.500px;font-size:12.500px;">Font: Default</div>
  <!-- borders -->
  <div class="abs" style="left:0;top:20px;width:1px;height:513px;background:#7c809c;"></div>
  <div class="abs" style="left:1px;top:20px;width:2px;height:511px;background:linear-gradient(90deg,#dfe3f3,#f4f4fa);"></div>
  <div class="abs" style="left:693px;top:20px;width:1px;height:511px;background:#e8eaf6;"></div><div class="abs" style="left:694px;top:20px;width:1px;height:513px;background:#cdd1ec;"></div><div class="abs" style="left:695px;top:20px;width:1px;height:513px;background:#8a8eae;"></div>
  <div class="abs" style="left:0;top:531px;width:696px;height:2px;background:#9094b2;"></div>
</div>

<!-- Math panel -->
<div class="abs" id="mp" style="left:462px;top:361px;width:550px;height:379px;background:#eeeee6;">
  <div class="abs title" style="left:0;top:0;width:550px;height:20px;"></div>
  <svg class="abs" style="left:2px;top:1px;opacity:.62" width="19" height="18" viewBox="0 0 19 17">
 <ellipse cx="5" cy="13.500" rx="4.500" ry="3" fill="#e07820"/><ellipse cx="10" cy="14.500" rx="4" ry="2.300" fill="#4a9a3a"/><circle cx="3.500" cy="14" r="1.800" fill="#d03020"/>
 <path d="M3 9c0-4 2-7.500 5-7.500S13 4 12.500 8c-.3 2.500-2 4.500-4.500 4.500S3 11 3 9z" fill="#3a78c8"/>
 <path d="M5.500 1.500l1.500-1.500 1 2.500z" fill="#222"/>
 <circle cx="6" cy="7.500" r="1.900" fill="#fff"/><circle cx="10" cy="7" r="1.900" fill="#fff"/><circle cx="6.300" cy="7.800" r=".9" fill="#111"/><circle cx="10.200" cy="7.300" r=".9" fill="#111"/>
 <path d="M9 10l8.500-3.500-1 3L10 12z" fill="#e06a20"/><path d="M14.500 3l3-2 .5 2.500z" fill="#d8a040"/><path d="M15 1.500l1.500-1.500" stroke="#6aa0e0" stroke-width="1"/>
</svg>
      <div class="t" style="left:23px;top:3.500px;font-size:13.500px;letter-spacing:-.45px;color:#3e4052;">LyX: Math Panel</div>
  <svg class="abs" style="left:531px;top:2px" width="17" height="17" viewBox="0 0 17 17"><circle cx="8.500" cy="8.500" r="6.800" fill="#8e92b0" stroke="#7a7e9c" stroke-width=".8"/><path d="M5.400 5.300l6.200 6.400M11.600 5.300l-6.200 6.400" stroke="#15151a" stroke-width="1.600"/></svg>
  <div class="abs" style="left:0;top:20px;width:1px;height:359px;background:#70749a;"></div>
  <div class="abs" style="left:1px;top:20px;width:2px;height:357px;background:linear-gradient(90deg,#dfe3f3,#f0f0f6);"></div>
  <div class="abs" style="left:547px;top:20px;width:1px;height:357px;background:#eceef8;"></div><div class="abs" style="left:548px;top:20px;width:1px;height:359px;background:#cdd1ec;"></div><div class="abs" style="left:549px;top:20px;width:1px;height:359px;background:#8a8eae;"></div>
  <div class="abs" style="left:1px;top:376px;width:548px;height:2px;background:#e4e6f4;"></div><div class="abs" style="left:0;top:378px;width:550px;height:1px;background:#6e7296;"></div>

<div class="abs" style="left:14px;top:31px;width:71px;height:31px;border-radius:7px;border:2px solid #3a3a38;box-sizing:border-box;"></div>
<div class="btn" style="left:17.5px;top:34px;width:64.1px;height:26px;"></div>
<div class="btn" style="left:91.6px;top:34px;width:68.4px;height:27px;"></div>
<div class="btn" style="left:168.3px;top:34px;width:67.9px;height:27px;"></div>
<div class="btn" style="left:245.3px;top:34px;width:68.3px;height:27px;"></div>
<div class="btn" style="left:14.2px;top:73.2px;width:25.8px;height:22.4px;"></div>
<div class="btn" style="left:14.2px;top:107px;width:25.8px;height:22.4px;"></div>
<div class="btn" style="left:48.3px;top:73.2px;width:25.4px;height:22.4px;"></div>
<div class="btn" style="left:48.3px;top:107px;width:25.4px;height:22.4px;"></div>
<div class="btn" style="left:82.3px;top:73.2px;width:25.6px;height:22.4px;"></div>
<div class="btn" style="left:82.3px;top:107px;width:25.6px;height:22.4px;"></div>
  <svg class="abs" style="left:8px;top:29px" width="320" height="104" viewBox="470 390 320 104" font-family="'DejaVu Sans',sans-serif">
   <path d="M497.300 407.500l2.200 0 2 5.500 0-10.800 10 0 0 2" fill="none" stroke="#000" stroke-width="1.600"/>
   <rect x="506.300" y="406.200" width="3.800" height="6.600" fill="none" stroke="#0000f0" stroke-width="1.800"/>
   <path d="M522.800 406.500h8.400l-4.200 4.600z" fill="#000"/>
   <path d="M576 409h2.600v2.500h7v-2.500h2.600v4.900h-12.200z" fill="#f40000"/>
   <path d="M599.800 406.500h8.400l-4.200 4.600z" fill="#000"/>
   <text x="649.500" y="415.700" font-size="19.500" fill="#0000f0" stroke="#0000f0" stroke-width=".5" textLength="11.500" lengthAdjust="spacingAndGlyphs">Σ</text>
   <rect x="663.200" y="401.300" width="4.200" height="3.800" fill="#fff" stroke="#000" stroke-width="1.500"/><rect x="663.200" y="410.900" width="4.200" height="3.800" fill="#fff" stroke="#000" stroke-width="1.500"/>
   <path d="M677.300 406.500h8.400l-4.200 4.600z" fill="#000"/>
   <text x="727.800" y="406.600" font-size="9.500" font-weight="bold" fill="#0000f0" font-family="'DejaVu Sans Mono',monospace" textLength="8" lengthAdjust="spacingAndGlyphs">A</text>
   <text x="736.500" y="406.600" font-size="9.500" font-weight="bold" font-style="italic" fill="#0000f0" textLength="8.500" lengthAdjust="spacingAndGlyphs">A</text>
   <text x="727.500" y="416.600" font-size="10.500" fill="#000" stroke="#000" stroke-width=".3" textLength="8.500" lengthAdjust="spacingAndGlyphs">A</text>
   <text x="736.800" y="416.600" font-size="10.500" fill="#0000f0" font-family="'DejaVu Sans Mono',monospace" textLength="8.500" lengthAdjust="spacingAndGlyphs">A</text>
   <path d="M754.200 406.500h8.400l-4.200 4.600z" fill="#000"/>
   <!-- small icons row 2 -->
   <path d="M485.300 438.600h-2.800v12.200h2.800M494.700 438.600h2.800v12.200h-2.800" fill="none" stroke="#000" stroke-width="1.700"/>
   <rect x="488" y="439.500" width="3.800" height="10.300" fill="none" stroke="#0000f0" stroke-width="2"/>
   <g fill="none" stroke="#0000f0" stroke-width="1.200"><rect x="517.600" y="438.500" width="2.900" height="2.900"/><rect x="522.600" y="438.500" width="2.900" height="2.900"/><rect x="527.600" y="438.500" width="2.900" height="2.900"/><rect x="517.600" y="443.500" width="2.900" height="2.900"/><rect x="522.600" y="443.500" width="2.900" height="2.900"/><rect x="527.600" y="443.500" width="2.900" height="2.900"/><rect x="517.600" y="448.500" width="2.900" height="2.900"/><rect x="522.600" y="448.500" width="2.900" height="2.900"/><rect x="527.600" y="448.500" width="2.900" height="2.900"/></g>
   <rect x="551.600" y="439.800" width="4.700" height="8.200" fill="#f4f2ee" stroke="#000" stroke-width="1.200"/><rect x="558.500" y="445.800" width="3.900" height="5.600" fill="#f4f2ee" stroke="#0000f0" stroke-width="1.200"/>
   <!-- row 3 -->
   <path d="M482.900 472.100h14M482.900 474.500h14M482.900 483.500h14M482.900 485.800h14" stroke="#000" stroke-width="1"/>
   <rect x="487.600" y="477.500" width="4.800" height="2.800" fill="#f4f2ee" stroke="#0000f0" stroke-width="1.100"/>
   <rect x="521.600" y="471.700" width="4.800" height="4.400" fill="#f4f2ee" stroke="#0000f0" stroke-width="1.200"/><rect x="521.600" y="481.800" width="4.800" height="4.400" fill="#f4f2ee" stroke="#0000f0" stroke-width="1.200"/>
   <path d="M517.800 478.900h12.300" stroke="#000" stroke-width="1.800"/>
   <rect x="551.600" y="473.900" width="4.700" height="8.400" fill="#f4f2ee" stroke="#0000f0" stroke-width="1.200"/><rect x="558.800" y="470.500" width="3.800" height="5.600" fill="#fff" stroke="#000" stroke-width="1.200"/>
  </svg>

  <div class="t m" style="left:14px;top:139px;font-size:12.500px;"><u>F</u>unctions</div>
  <div class="abs" style="left:14px;top:158px;width:99px;height:173px;background:#fff;border-left:1px solid #55554f;border-top:1px solid #55554f;box-sizing:border-box;overflow:hidden;" id="flist">

   <div class="t" style="left:4px;top:-5px;font-size:12.500px;letter-spacing:-.2px;">log</div>
   <div class="t" style="left:4px;top:13px;font-size:12.500px;letter-spacing:-.2px;">max</div>
   <div class="t" style="left:4px;top:31px;font-size:12.500px;letter-spacing:-.2px;">min</div>
   <div class="t" style="left:4px;top:49px;font-size:12.500px;letter-spacing:-.2px;">sec</div>
   <div class="t" style="left:4px;top:67px;font-size:12.500px;letter-spacing:-.2px;">sin</div>
   <div class="t" style="left:4px;top:85px;font-size:12.500px;letter-spacing:-.2px;">sinh</div>
   <div class="t" style="left:4px;top:103px;font-size:12.500px;letter-spacing:-.2px;">sup</div>
   <div class="t" style="left:4px;top:121px;font-size:12.500px;letter-spacing:-.2px;">tan</div>
   <div class="t" style="left:4px;top:139px;font-size:12.500px;letter-spacing:-.2px;">tanh</div>
   <div class="t" style="left:4px;top:157px;font-size:12.500px;letter-spacing:-.2px;">Pr</div>
  </div>
  <div class="abs" style="left:97px;top:159px;width:16px;height:172px;background:linear-gradient(90deg,#cfcdc7 0,#f0efec 4px,#fff 8px,#fff 100%);border-left:1px solid #aaa8a2;box-sizing:border-box;"></div>
  <div class="abs" style="left:97px;top:159px;width:16px;height:17px;box-sizing:border-box;border:1px solid #8a8884;border-radius:2px;background:linear-gradient(90deg,#f0eeea,#fff 40%,#fff 70%,#e8e6e2);"></div>
  <svg class="abs" style="left:100px;top:162px" width="10" height="10" viewBox="0 0 10 10"><path d="M5 .5L9.500 5.500H7.200V9.500H2.800V5.500H.5z" fill="#000"/></svg>
  <div class="abs" style="left:97px;top:265px;width:16px;height:35px;box-sizing:border-box;border:1px solid #a08c3c;background:linear-gradient(90deg,#ecd070 0,#f6e290 25%,#f8e8a4 50%,#ecd47c 80%,#d4b450 100%);"></div>
  <div class="abs" style="left:97px;top:300px;width:16px;height:31px;box-sizing:border-box;border:1px solid #8a8884;border-radius:2px;background:linear-gradient(90deg,#f0eeea,#fff 40%,#fff 70%,#e8e6e2);"></div>
  <svg class="abs" style="left:100px;top:302px" width="10" height="28" viewBox="0 0 10 28"><path d="M5 .5L9.500 5.500H7.200V9.500H2.800V5.500H.5z" fill="#000"/><path d="M2 12.500h6" stroke="#000" stroke-width="1.200"/><path d="M5 27L9.500 22H7.200V17.500H2.800V22H.5z" fill="#000"/><path d="M1.500 15.500h7" stroke="#000" stroke-width="1.200"/></svg>

  <div class="abs" style="left:322px;top:38px;width:213px;height:293px;border:1px solid #6e6e68;box-sizing:border-box;box-shadow:1px 1px 0 #fff, inset 1px 1px 0 #fff;"></div>
  <div class="abs" style="left:329px;top:30px;width:53px;height:16px;background:#eeeee6;"></div>
  <div class="t" style="left:332.500px;top:32px;font-size:12.500px;letter-spacing:-.15px;">Symbols</div>

<div class="btn" style="left:333.3px;top:52.3px;width:169.5px;height:23.7px;"></div>
  <div class="t" style="left:342px;top:58px;font-size:12.300px;">Big operators</div>
  <div class="abs" style="left:475px;top:55px;width:5px;height:19px;background:repeating-linear-gradient(90deg,#b0aea8 0 1px,#fff 1px 2px,#e8e6e0 2px 3px);"></div>
  <svg class="abs" style="left:484px;top:59px" width="12" height="13" viewBox="0 0 12 13"><path d="M1 1h9.500v1.700H1zM3.500 4h4.500v3.500h2.700L5.750 12.500 .8 7.500h2.700z" fill="#000"/></svg>
  <div class="abs" style="left:333px;top:85px;width:191px;height:202px;border-left:1px solid #55554f;border-top:1px solid #55554f;border-bottom:1px solid #fff;box-sizing:border-box;"></div>

<div class="btn" style="left:334.8px;top:89.3px;width:36.6px;height:33.8px;"></div>
<div class="btn" style="left:374.8px;top:89.3px;width:36.6px;height:33.8px;"></div>
<div class="btn" style="left:414.8px;top:89.3px;width:36.6px;height:33.8px;"></div>
<div class="btn" style="left:454.8px;top:89.3px;width:36.6px;height:33.8px;"></div>
<div class="btn" style="left:334.8px;top:129.3px;width:36.6px;height:33.8px;"></div>
<div class="btn" style="left:374.8px;top:129.3px;width:36.6px;height:33.8px;"></div>
<div class="btn" style="left:414.8px;top:129.3px;width:36.6px;height:33.8px;"></div>
<div class="btn" style="left:454.8px;top:129.3px;width:36.6px;height:33.8px;"></div>
<div class="btn" style="left:334.8px;top:169.3px;width:36.6px;height:33.8px;"></div>
<div class="btn" style="left:374.8px;top:169.3px;width:36.6px;height:33.8px;"></div>
<div class="btn" style="left:414.8px;top:169.3px;width:36.6px;height:33.8px;"></div>
<div class="btn" style="left:454.8px;top:169.3px;width:36.6px;height:33.8px;"></div>
<div class="btn" style="left:334.8px;top:209.3px;width:36.6px;height:33.8px;"></div>
<div class="btn" style="left:374.8px;top:209.3px;width:36.6px;height:33.8px;"></div>
<!--SYMS--><svg class="abs" style="left:333px;top:85px" width="175" height="165" viewBox="795 446 175 165" font-family="'DejaVu Math TeX Gyre','DejaVu Sans',sans-serif" fill="#000">
<text x="804.0" y="472.5" font-size="20.6" textLength="24.5" lengthAdjust="spacingAndGlyphs">∑</text>
<text x="848.4" y="473.4" font-size="23.1" textLength="15.7" lengthAdjust="spacingAndGlyphs">∫</text>
<text x="888.7" y="473.4" font-size="23.1" textLength="15.2" lengthAdjust="spacingAndGlyphs">∮</text>
<text x="924.9" y="472.5" font-size="20.6" textLength="23.5" lengthAdjust="spacingAndGlyphs">∏</text>
<text x="804.2" y="512.1" font-size="21.1" textLength="23.6" lengthAdjust="spacingAndGlyphs">∐</text>
<text x="845.2" y="515.4" font-size="34.1" textLength="20.7" lengthAdjust="spacingAndGlyphs">⊔</text>
<text x="882.2" y="516.0" font-size="34.6" textLength="27.5" lengthAdjust="spacingAndGlyphs">⊗</text>
<text x="922.2" y="516.0" font-size="34.6" textLength="27.5" lengthAdjust="spacingAndGlyphs">⊙</text>
<text x="802.2" y="556.5" font-size="34.6" textLength="27.5" lengthAdjust="spacingAndGlyphs">⊕</text>
<text x="845.5" y="556.0" font-size="33.6" textLength="20.1" lengthAdjust="spacingAndGlyphs">∩</text>
<text x="885.5" y="555.4" font-size="33.6" textLength="20.1" lengthAdjust="spacingAndGlyphs">∪</text>
<text x="925.5" y="555.4" font-size="33.6" textLength="20.1" lengthAdjust="spacingAndGlyphs">⊎</text>
<text x="805.6" y="595.9" font-size="33.8" textLength="20.8" lengthAdjust="spacingAndGlyphs">∨</text>
<text x="845.6" y="596.2" font-size="33.8" textLength="20.8" lengthAdjust="spacingAndGlyphs">∧</text>
</svg><!--/SYMS-->
  <div class="abs" style="left:508px;top:86px;width:16px;height:201px;background:#e4e3de;"></div>
  <div class="abs" style="left:508px;top:86px;width:16px;height:17px;box-sizing:border-box;border:1px solid #a8a6a2;border-radius:2px;background:#e2e1dd;"></div>
  <svg class="abs" style="left:511px;top:89px" width="10" height="10" viewBox="0 0 10 10"><path d="M5 .5L9.500 5.500H7.200V9.500H2.800V5.500H.5z" fill="#c4c3be" stroke="#f8f8f6" stroke-width=".6"/></svg>
  <div class="abs" style="left:508px;top:103px;width:16px;height:153px;box-sizing:border-box;border:1px solid #a08c3c;background:linear-gradient(90deg,#ecd070 0,#f6e290 25%,#f8e8a4 50%,#ecd47c 80%,#d4b450 100%);"></div>
  <div class="abs" style="left:509px;top:173px;width:14px;height:14px;background:repeating-linear-gradient(#b89c48 0 1px,#fbeeb4 1px 2px);"></div>
  <div class="abs" style="left:508px;top:256px;width:16px;height:31px;box-sizing:border-box;border:1px solid #a8a6a2;border-radius:2px;background:#e2e1dd;"></div>
  <svg class="abs" style="left:511px;top:258px" width="10" height="28" viewBox="0 0 10 28"><g fill="#c4c3be" stroke="#f8f8f6" stroke-width=".6"><path d="M5 .5L9.500 5.500H7.200V9.500H2.800V5.500H.5z"/><path d="M5 27L9.500 22H7.200V17.500H2.800V22H.5z"/></g><path d="M2 13.500h6" stroke="#555" stroke-width="1.200"/></svg>

<div class="btn" style="left:333.2px;top:297.2px;width:110.4px;height:21px;"></div>
  <div class="t m" style="left:352px;top:300.500px;font-size:12.500px;letter-spacing:.1px;"><u>D</u>etach panel</div>

<div class="btn" style="left:466.2px;top:341.4px;width:67.2px;height:21px;"></div>
  <div class="t m" style="left:485px;top:344.500px;font-size:12.500px;"><u>C</u>lose</div>

  <svg class="abs" style="left:535px;top:364px" width="13" height="13" viewBox="0 0 13 13"><path d="M12.500 1L1 12.500M12.500 5L5 12.500M12.500 9L9 12.500" stroke="#66645e" stroke-width="1.100"/><path d="M12.500 2.200L2.200 12.500M12.500 6.200L6.200 12.500M12.500 10.200L10.200 12.500" stroke="#fff" stroke-width="1"/></svg>

</div>

<!-- bottom panel -->
<div class="abs panel" style="left:0;top:744px;width:371px;height:24px;"></div>
<div class="abs" style="left:9px;top:745px;width:1px;height:23px;background:#a8a8a8;"></div><div class="abs" style="left:10px;top:745px;width:1px;height:23px;background:#fff;"></div>
<div class="abs" style="left:40px;top:745px;width:1px;height:23px;background:#a8a8a8;"></div>
<svg class="abs" style="left:16px;top:748px" width="21" height="17" viewBox="0 0 21 17">
 <path d="M2.500 3.500L5 1h11l2.500 2.500v10L16 15.500H5L2.500 13.500z" fill="#3c3458" stroke="#1c1830" stroke-width=".8"/>
 <rect x="5.500" y="3" width="9" height="8" fill="#e8e4ec" stroke="#888" stroke-width=".5"/>
 <path d="M7 5h5M7 7h4M7 9h5" stroke="#999" stroke-width=".6"/>
 <path d="M1 13.500l2.500-1.500h14l2.500 1.500-1 2H2z" fill="#5a4a40"/>
 <path d="M8 14.500l8.500-8 2 2-8.500 7.500-2.500.500z" fill="#e8a020" stroke="#7a4a10" stroke-width=".5"/>
</svg>
<div class="abs" style="left:42px;top:745px;width:9px;height:23px;background:#f0f0f0;border-left:1px solid #fff;border-right:1px solid #999;box-sizing:border-box;"></div>
<div class="abs" style="left:44px;top:747px;width:5px;height:20px;background:radial-gradient(circle at 1px 1px,#8a8a8a 0 .7px,transparent 1px) 0 0/3px 3px;"></div>
<div class="abs tb" style="left:52px;top:745px;width:78px;height:22px;"></div>
<div class="abs tb" style="left:131px;top:745px;width:79px;height:22px;"></div>
<div class="abs tb" style="left:211px;top:745px;width:79px;height:22px;"></div>
<div class="abs tb" style="left:291px;top:745px;width:79px;height:22px;"></div>
<svg class="abs" style="left:55px;top:749px" width="16" height="14" viewBox="0 0 16 14"><path d="M1 3.500l5-2 2 1.500 6-.5 1 8.500-9 2-4-1z" fill="#a8aec4" stroke="#70768c" stroke-width=".6"/><path d="M1 3.500l7 2.500 6-3.500" fill="none" stroke="#d4d8e4" stroke-width=".8"/></svg>
<div class="t dv" style="left:71px;top:750px;font-size:13px;">[2003-11-</div>
<svg class="abs" style="left:135px;top:749px" width="15" height="14" viewBox="0 0 15 14"><rect x=".5" y=".5" width="14" height="12" rx="1.500" fill="#b4b2a8" stroke="#77756c"/><rect x="2.300" y="2.300" width="10.400" height="7.600" fill="#7c8480" stroke="#555" stroke-width=".6"/><rect x="2" y="11" width="11" height="1.300" fill="#8a887e"/></svg>
<div class="t dv" style="left:150px;top:750px;font-size:13px;">[Terminal]</div>
<svg class="abs" style="left:213px;top:747px" width="19" height="17" viewBox="0 0 19 17">
 <ellipse cx="5" cy="13.500" rx="4.500" ry="3" fill="#e07820"/><ellipse cx="10" cy="14.500" rx="4" ry="2.300" fill="#4a9a3a"/><circle cx="3.500" cy="14" r="1.800" fill="#d03020"/>
 <path d="M3 9c0-4 2-7.500 5-7.500S13 4 12.500 8c-.3 2.500-2 4.500-4.500 4.500S3 11 3 9z" fill="#3a78c8"/>
 <path d="M5.500 1.500l1.500-1.500 1 2.500z" fill="#222"/>
 <circle cx="6" cy="7.500" r="1.900" fill="#fff"/><circle cx="10" cy="7" r="1.900" fill="#fff"/><circle cx="6.300" cy="7.800" r=".9" fill="#111"/><circle cx="10.200" cy="7.300" r=".9" fill="#111"/>
 <path d="M9 10l8.500-3.500-1 3L10 12z" fill="#e06a20"/><path d="M14.500 3l3-2 .5 2.500z" fill="#d8a040"/><path d="M15 1.500l1.500-1.500" stroke="#6aa0e0" stroke-width="1"/>
</svg>
<div class="t dv" style="left:240px;top:750px;">ca2.lyx</div>
<svg class="abs" style="left:292px;top:747px" width="19" height="17" viewBox="0 0 19 17">
 <ellipse cx="5" cy="13.500" rx="4.500" ry="3" fill="#e07820"/><ellipse cx="10" cy="14.500" rx="4" ry="2.300" fill="#4a9a3a"/><circle cx="3.500" cy="14" r="1.800" fill="#d03020"/>
 <path d="M3 9c0-4 2-7.500 5-7.500S13 4 12.500 8c-.3 2.500-2 4.500-4.500 4.500S3 11 3 9z" fill="#3a78c8"/>
 <path d="M5.500 1.500l1.500-1.500 1 2.500z" fill="#222"/>
 <circle cx="6" cy="7.500" r="1.900" fill="#fff"/><circle cx="10" cy="7" r="1.900" fill="#fff"/><circle cx="6.300" cy="7.800" r=".9" fill="#111"/><circle cx="10.200" cy="7.300" r=".9" fill="#111"/>
 <path d="M9 10l8.500-3.500-1 3L10 12z" fill="#e06a20"/><path d="M14.500 3l3-2 .5 2.500z" fill="#d8a040"/><path d="M15 1.500l1.500-1.500" stroke="#6aa0e0" stroke-width="1"/>
</svg>
<div class="t dv" style="left:309px;top:750px;">LyX: Math</div>
<!-- lock -->
<svg class="abs" style="left:827px;top:744px" width="23" height="23" viewBox="0 0 23 23">
 <path d="M4 9V6.500C4 3.500 6 1.500 8.500 1.500S13 3.500 13 6.500V9" fill="none" stroke="#d8d8d8" stroke-width="2"/>
 <rect x="1.500" y="8.500" width="13" height="11.500" rx="1.500" fill="#c89858" stroke="#7a5424" stroke-width=".8"/>
 <path d="M2.500 11h11M2.500 14h11M2.500 17h11" stroke="#b08040" stroke-width=".7"/>
 <rect x="15" y="2" width="2.500" height="12" fill="#e8e8e8" stroke="#999" stroke-width=".4"/><path d="M17.500 4h2v1.500h-2zM17.500 7h1.500v1.500h-1.500z" fill="#ddd"/>
 <circle cx="16" cy="17.500" r="4.500" fill="#ececec" stroke="#aaa" stroke-width=".6"/><circle cx="16" cy="18.500" r="1.300" fill="#444"/>
</svg>
<!-- logout -->
<svg class="abs" style="left:857px;top:745px" width="24" height="22" viewBox="0 0 24 22">
 <path d="M7 1.500h12l3.500 1V20l-3.500 1H7z" fill="#2c4c34" stroke="#18281c" stroke-width=".6"/>
 <path d="M7 1.500h8.500l-2.500 6 2.500 4-2.500 4 1.500 5.500H7z" fill="#c8c8c4" stroke="#777" stroke-width=".5"/>
 <path d="M.5 7.500h6V4l6.500 6.500L6.500 17v-3.500h-6z" fill="#e02818" stroke="#8a1008" stroke-width=".7"/>
</svg>
<!-- pager -->
<div class="abs" style="left:888px;top:744px;width:126px;height:24px;background:#e4e4e4;"></div>
<div class="abs" style="left:890px;top:746px;width:122px;height:19px;background:#9c9c98;border:1px solid #55554f;box-sizing:border-box;"></div>
<div class="abs" style="left:891px;top:747px;width:24px;height:17px;background:#5a607a;"></div>
<div class="abs" style="left:915px;top:747px;width:1px;height:17px;background:#e8e8e8;"></div>
<div class="abs" style="left:939px;top:747px;width:1px;height:17px;background:#e8e8e8;"></div>
<div class="abs" style="left:963px;top:747px;width:1px;height:17px;background:#e8e8e8;"></div>
<div class="abs" style="left:987px;top:747px;width:1px;height:17px;background:#e8e8e8;"></div>
<div class="abs" style="left:893px;top:748px;width:14px;height:10px;background:#dcdcd4;border:1px solid #222;box-sizing:border-box;"></div>
<div class="abs" style="left:902px;top:755px;width:12px;height:8px;background:#dcdcd4;border:1px solid #222;box-sizing:border-box;"></div>
<div class="abs panel" style="left:1014px;top:744px;width:10px;height:24px;border-left:1px solid #fff;box-sizing:border-box;"></div>
</body></html>
